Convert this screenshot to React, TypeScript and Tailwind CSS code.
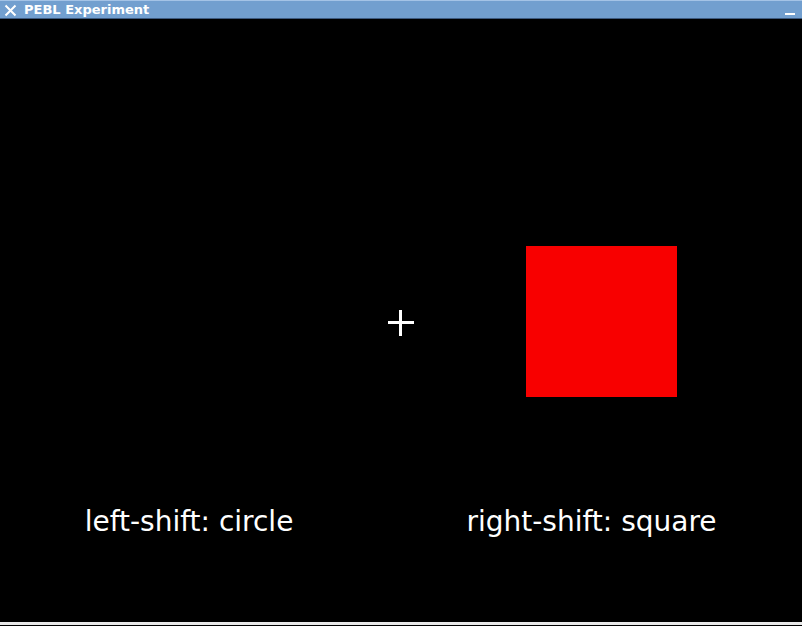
import React from "react";

export default function App() {
  return (
    <div className="flex flex-col w-[802px] h-[626px] bg-black overflow-hidden" style={{ fontFamily: '"DejaVu Sans", sans-serif' }}>
      <div className="flex items-center h-[19px] shrink-0 bg-[#729fcf] border-t border-[#a4c3e6] border-b border-b-[#3d5a80]">
        <svg width="24" height="18" viewBox="0 0 24 18" className="shrink-0">
          <path d="M5.5 4.5 L15.5 14.5 M15.5 4.5 L5.5 14.5" stroke="white" strokeWidth="2" fill="none" />
        </svg>
        <span className="text-white font-bold text-[13px] leading-none">PEBL Experiment</span>
        <div className="ml-auto mr-[7px] mt-[8px] w-[10px] h-[2px] bg-white" />
      </div>

      <div className="flex flex-col flex-1 pt-[227px]">
        <div className="flex items-start pl-[388px]">
          <div className="relative shrink-0 mt-[64px] w-[26px] h-[26px]">
            <div className="absolute left-0 top-[11px] w-[26px] h-[3px] bg-white" />
            <div className="absolute left-[11px] top-0 w-[3px] h-[26px] bg-white" />
          </div>
          <div className="ml-[112px] w-[151px] h-[151px] bg-[#f80000]" />
        </div>

        <div className="flex mt-[111px] pl-[39px] text-white text-[28px] leading-none">
          <div className="w-[300px] text-center">left-shift: circle</div>
          <div className="ml-[102px] w-[301px] text-center">right-shift: square</div>
        </div>
      </div>

      <div className="h-[3px] shrink-0 bg-[#e8e8e8]" />
      <div className="h-[1px] shrink-0" />
    </div>
  );
}
